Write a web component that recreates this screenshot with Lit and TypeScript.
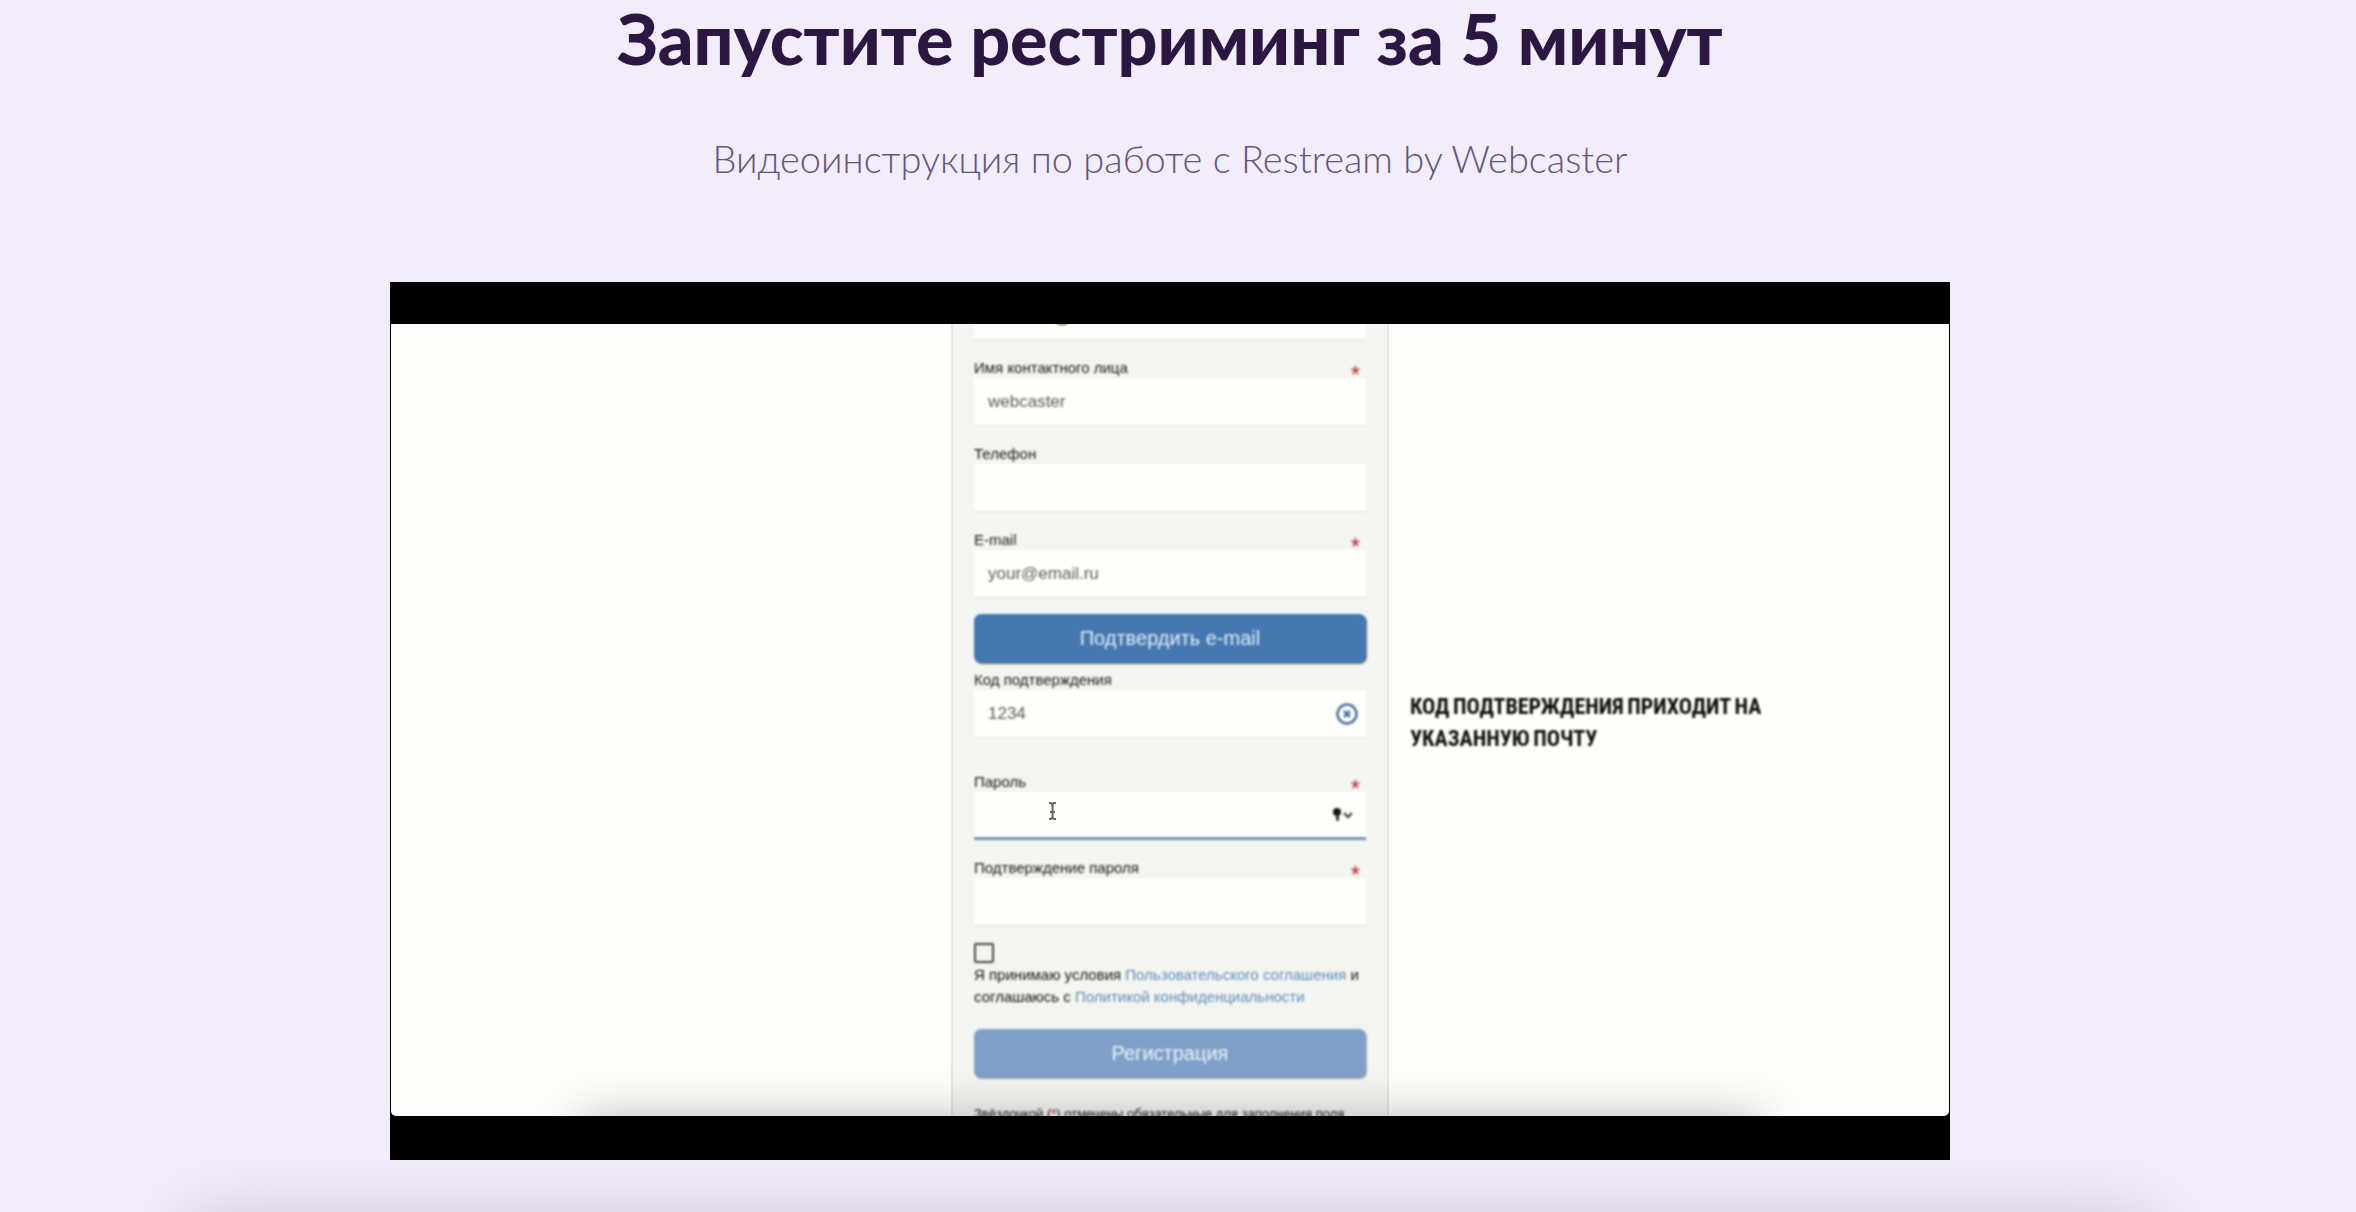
import { LitElement, html, css, nothing } from "lit";
import { customElement, property } from "lit/decorators.js";

@customElement("form-field")
class FormField extends LitElement {
  @property() label = "";
  @property() hint = "";
  @property() kind = "text";
  @property() icon = "";
  @property({ type: Boolean }) required = false;
  @property({ type: Boolean }) active = false;
  @property({ type: Boolean }) indented = false;

  static styles = css`
    :host {
      display: block;
    }
    .head {
      display: flex;
      justify-content: space-between;
      height: 18px;
      padding-right: 6px;
      font-size: 15px;
      line-height: 16px;
      color: #161816;
    }
    .star {
      padding-top: 7px;
      font-size: 24px;
      color: #b82a34;
    }
    .box {
      display: flex;
      align-items: center;
      box-sizing: border-box;
      height: 48px;
      padding: 0 8px 0 14px;
      background: #fdfffa;
      border-bottom: 1px solid #dfe1de;
    }
    .box.active {
      border-bottom: 3px solid #7592b4;
    }
    .box.indented {
      padding-top: 4px;
      padding-left: 80px;
    }
    input {
      flex: 1;
      min-width: 0;
      height: 100%;
      padding: 0;
      border: 0;
      outline: 0;
      background: none;
      font: 17px "Liberation Sans", Arial, sans-serif;
      color: #5a5c5a;
    }
    input::placeholder {
      color: #5a5c5a;
      opacity: 1;
    }
    .box.indented input::placeholder {
      color: #111;
    }
    svg {
      display: block;
      flex: none;
    }
    .key {
      margin-right: 6px;
    }
  `;

  private glyph() {
    if (this.icon === "clear") {
      return html`<svg width="22" height="22" viewBox="0 0 22 22" fill="none" stroke="#4a6f98">
        <circle cx="11" cy="11" r="9.500" stroke-width="2.500" />
        <path d="M8 8l6 6M14 8l-6 6" stroke-width="2.500" />
      </svg>`;
    }
    if (this.icon === "key") {
      return html`<svg class="key" width="20" height="16" viewBox="0 0 20 16">
        <circle cx="5" cy="5" r="4" fill="#151515" />
        <path d="M4 8h3v5l-1 1.500L4 13z" fill="#333" />
        <path d="M12 6l4 4 4-4" fill="none" stroke="#333" stroke-width="2" />
      </svg>`;
    }
    return nothing;
  }

  render() {
    const box = `box${this.active ? " active" : ""}${this.indented ? " indented" : ""}`;
    return html`
      <div class="head">
        <label for="input">${this.label}</label>
        ${this.required ? html`<span class="star">*</span>` : nothing}
      </div>
      <div class=${box}>
        <input id="input" type=${this.kind} placeholder=${this.hint} />
        ${this.glyph()}
      </div>
    `;
  }
}

@customElement("sign-up-form")
class SignUpForm extends LitElement {
  static styles = css`
    :host {
      display: block;
      box-sizing: border-box;
      height: 100%;
      padding: 0 21px;
      background: #f3f5f1;
      border: solid #e5e7e4;
      border-width: 0 2px;
      font-family: "Liberation Sans", Arial, sans-serif;
      font-size: 15px;
      color: #111311;
    }
    form {
      display: flex;
      flex-direction: column;
      gap: 20px;
      margin-top: -50px;
      filter: blur(1px);
    }
    .group {
      display: flex;
      flex-direction: column;
    }
    .group button {
      margin: 16px 0 9px;
    }
    .spaced {
      margin-bottom: 16px;
    }
    button {
      height: 49px;
      border: 0;
      border-radius: 7px;
      background: #4577b0;
      color: #e4eefa;
      font: 20px "Liberation Sans", Arial, sans-serif;
      box-shadow: 1px 1px 1px #77736c;
    }
    .pale {
      background: #7fa1c7;
      color: #eaf2fb;
      box-shadow: 1px 1px 1px #a9abaa;
    }
    .terms {
      display: flex;
      flex-direction: column;
      gap: 1px;
      margin-top: -3px;
      padding-bottom: 1px;
      line-height: 22px;
      white-space: nowrap;
    }
    input {
      appearance: none;
      width: 20px;
      height: 20px;
      margin: 0;
      border: 2px solid #444644;
      border-radius: 2px;
    }
    a {
      color: #5f8aba;
      text-decoration: none;
    }
    .note {
      margin: 5px 0 0;
      font-size: 13px;
      line-height: 22px;
      white-space: nowrap;
    }
    .note span {
      color: #d8232a;
    }
  `;

  render() {
    return html`
      <form>
        <form-field hint="@" indented></form-field>
        <form-field label="Имя контактного лица" hint="webcaster" required></form-field>
        <form-field label="Телефон" kind="tel"></form-field>
        <div class="group spaced">
          <form-field label="E-mail" hint="your@email.ru" kind="email" required></form-field>
          <button type="button">Подтвердить e-mail</button>
          <form-field label="Код подтверждения" hint="1234" icon="clear"></form-field>
        </div>
        <form-field label="Пароль" kind="password" icon="key" required active></form-field>
        <form-field label="Подтверждение пароля" kind="password" required></form-field>
        <div class="terms">
          <input id="terms" type="checkbox" />
          <label for="terms">
            Я принимаю условия <a href="#agreement">Пользовательского соглашения</a> и<br />
            соглашаюсь с <a href="#privacy">Политикой конфиденциальности</a>
          </label>
        </div>
        <button class="pale" type="button">Регистрация</button>
        <p class="note">Звёздочкой (<span>*</span>) отмечены обязательные для заполнения поля</p>
      </form>
    `;
  }
}

@customElement("app-root")
class AppRoot extends LitElement {
  static styles = css`
    :host {
      display: block;
    }
    .page {
      position: relative;
      display: flex;
      flex-direction: column;
      align-items: center;
      box-sizing: border-box;
      min-height: 100vh;
      padding-right: 16px;
      overflow: hidden;
      background: #f3ecfb;
      text-align: center;
    }
    h1 {
      margin: 0;
      font: 900 70px/76px Lato, "Open Sans", sans-serif;
      color: #2b1742;
    }
    .lead {
      margin: 52px 0 94px;
      font: 300 38px/60px Lato, "Open Sans", sans-serif;
      color: #655579;
    }
    .video {
      display: flex;
      box-sizing: border-box;
      width: 66.67%;
      min-height: 0;
      aspect-ratio: 16 / 9;
      padding: 42px 1px 44px;
      background: #000;
      text-align: left;
    }
    .frame {
      position: relative;
      flex: 1;
      display: grid;
      grid-template-columns: 1fr 438px 1fr;
      grid-template-rows: minmax(0, 1fr);
      min-height: 0;
      overflow: hidden;
      background: #fdfffa;
      border-radius: 0 0 5px 5px;
    }
    .frame::after {
      content: "";
      position: absolute;
      left: 12%;
      right: 12%;
      top: 100%;
      height: 80px;
      box-shadow: 0 0 48px rgba(0, 0, 0, 0.25);
    }
    sign-up-form {
      grid-column: 2;
    }
    .caption {
      align-self: center;
      margin: 0 0 0 21px;
      padding-top: 8px;
      font: 700 22px/32px "Bebas Neue", "Roboto Condensed", Roboto, sans-serif;
      color: #0c0e0c;
      filter: blur(1px);
    }
    .cursor {
      position: absolute;
      left: 657px;
      top: 478px;
    }
    .next {
      position: absolute;
      left: 190px;
      right: 206px;
      top: 1222px;
      height: 200px;
      box-shadow: 0 0 72px rgba(0, 0, 0, 0.2);
    }
  `;

  render() {
    return html`
      <main class="page">
        <h1>Запустите рестриминг за 5 минут</h1>
        <p class="lead">Видеоинструкция по работе с Restream by Webcaster</p>
        <section class="video">
          <div class="frame">
            <sign-up-form></sign-up-form>
            <p class="caption">КОД ПОДТВЕРЖДЕНИЯ ПРИХОДИТ НА<br />УКАЗАННУЮ ПОЧТУ</p>
            <svg class="cursor" width="9" height="18" viewBox="0 0 9 18" fill="none" stroke="#666" stroke-width="2">
              <path d="M1 1h2l1.500 1.500L6 1h2M4.500 2v14M1 17h2l1.500-1.500L6 17h2M2 10h5" />
            </svg>
          </div>
        </section>
        <div class="next"></div>
      </main>
    `;
  }
}
